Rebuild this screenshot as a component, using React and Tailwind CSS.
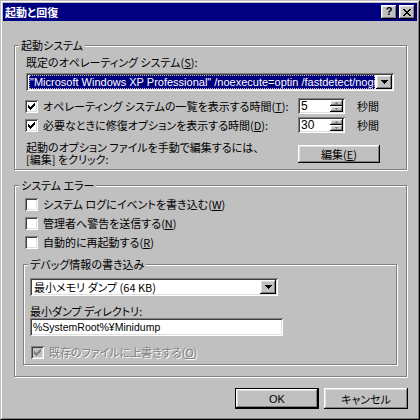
import React from 'react';

const raised =
  'bg-[#c0c0c0] shadow-[inset_-1px_-1px_0_#000,inset_1px_1px_0_#fff,inset_-2px_-2px_0_#808080,inset_2px_2px_0_#dfdfdf]';
const sunken =
  'shadow-[inset_1px_1px_0_#808080,inset_-1px_-1px_0_#fff,inset_2px_2px_0_#404040,inset_-2px_-2px_0_#dfdfdf]';
const etched = 'border border-[#808080] shadow-[1px_1px_0_#fff,inset_1px_1px_0_#fff]';
const latin = "font-['Liberation_Sans','Noto_Sans_CJK_JP',sans-serif]";

const CheckMark = ({ color = '#000' }) => (
  <svg width="7" height="7" viewBox="0 0 7 7" shapeRendering="crispEdges">
    <path
      fill={color}
      d="M0 2h1v3h-1z M1 3h1v3h-1z M2 4h1v3h-1z M3 3h1v3h-1z M4 2h1v3h-1z M5 1h1v3h-1z M6 0h1v3h-1z"
    />
  </svg>
);

const Checkbox = ({ checked, disabled }) => (
  <div
    className={`w-[13px] h-[13px] shrink-0 flex items-center justify-center ${sunken} ${
      disabled ? 'bg-[#c0c0c0]' : 'bg-white'
    }`}
  >
    {checked && <CheckMark color={disabled ? '#808080' : '#000'} />}
  </div>
);

const DownArrow = () => (
  <svg width="7" height="4" viewBox="0 0 7 4" shapeRendering="crispEdges">
    <path d="M0 0h7v1h-1v1h-1v1h-1v1h-1v-1h-1v-1h-1v-1h-1z" fill="#000" />
  </svg>
);

const GroupLabel = ({ children }) => (
  <span className="absolute -top-[8px] left-[4px] px-[2px] bg-[#c0c0c0] leading-[14px]">{children}</span>
);

const Spin = ({ value }) => (
  <div className={`w-[47px] h-[16px] bg-white flex items-center pl-[3px] pr-[2px] ${sunken}`}>
    <span className={`flex-1 leading-[12px] text-[12px] ${latin}`}>{value}</span>
    <div className="flex flex-col w-[13px] h-[12px]">
      <div className={`flex-1 flex items-center justify-center ${raised}`}>
        <svg width="3" height="2" viewBox="0 0 3 2" shapeRendering="crispEdges">
          <path d="M1 0h1v1h1v1h-3v-1h1z" fill="#808080" />
        </svg>
      </div>
      <div className={`flex-1 flex items-center justify-center ${raised}`}>
        <svg width="3" height="2" viewBox="0 0 3 2" shapeRendering="crispEdges">
          <path d="M0 0h3v1h-1v1h-1v-1h-1z" fill="#808080" />
        </svg>
      </div>
    </div>
  </div>
);

const CheckRow = ({ label, checked, disabled, className = '' }) => (
  <div className={`flex items-center h-[13px] ${className}`}>
    <Checkbox checked={checked} disabled={disabled} />
    <span
      className={`ml-[5px] leading-[13px] whitespace-nowrap ${
        disabled ? 'text-[#808080] [text-shadow:1px_1px_0_#fff]' : ''
      }`}
    >
      {label}
    </span>
  </div>
);

export default function App() {
  return (
    <div className="w-[420px] h-[420px] bg-[#c0c0c0] border border-t-[#c0c0c0] border-l-[#c0c0c0] border-b-black border-r-black text-black text-[11px] font-['Noto_Sans_CJK_JP','Liberation_Sans',sans-serif] [font-feature-settings:'palt'] overflow-hidden">
      <div className="h-full border border-t-white border-l-white border-b-[#808080] border-r-[#808080] p-[1px] flex flex-col">
        {/* title bar */}
        <div className="h-[18px] shrink-0 bg-[#000080] flex items-center pl-[2px] pr-[2px]">
          <span className="text-white font-bold leading-[14px] flex-1">起動と回復</span>
          <div className={`w-[16px] h-[14px] flex items-center justify-center ${raised}`}>
            <span className="font-bold text-[11px] leading-[11px] font-['Liberation_Sans',sans-serif] -mt-[1px]">?</span>
          </div>
          <div className={`w-[16px] h-[14px] ml-[2px] flex items-center justify-center ${raised}`}>
            <svg width="8" height="7" viewBox="0 0 8 7" shapeRendering="crispEdges">
              <path
                fill="#000"
                d="M0 0h2v1h-2z M6 0h2v1h-2z M1 1h2v1h-2z M5 1h2v1h-2z M2 2h4v1h-4z M3 3h2v1h-2z M2 4h4v1h-4z M1 5h2v1h-2z M5 5h2v1h-2z M0 6h2v1h-2z M6 6h2v1h-2z"
              />
            </svg>
          </div>
        </div>

        {/* 起動システム */}
        <div className={`relative mt-[24px] ml-[11px] w-[393px] h-[125px] shrink-0 ${etched}`}>
          <GroupLabel>起動システム</GroupLabel>
          <div className="mt-[9px] ml-[11px] h-[14px] leading-[14px]">既定のオペレーティング システム(<u>S</u>):</div>
          <div className={`mt-[4px] ml-[11px] w-[368px] h-[18px] bg-white flex items-center p-[2px] ${sunken}`}>
            <div className={`flex-1 h-[14px] mr-[1px] ml-[1px] bg-[#000080] text-white text-[11px] overflow-hidden whitespace-nowrap leading-[14px] outline-1 outline-dotted outline-[#c0c0c0] -outline-offset-1 pl-[1px] ${latin}`}>
              "Microsoft Windows XP Professional" /noexecute=optin /fastdetect/noguiboot
            </div>
            <div className={`w-[16px] h-[14px] flex items-center justify-center ${raised}`}>
              <DownArrow />
            </div>
          </div>

          <div className="mt-[7px] ml-[10px] flex items-center h-[16px]">
            <CheckRow className="w-[273px]" checked label={<>オペレーティング システムの一覧を表示する時間(<u>T</u>):</>} />
            <Spin value="5" />
            <span className="ml-[12px] leading-[14px]">秒間</span>
          </div>
          <div className="mt-[3px] ml-[10px] flex items-center h-[16px]">
            <CheckRow className="w-[273px]" checked label={<>必要なときに修復オプションを表示する時間(<u>D</u>):</>} />
            <Spin value="30" />
            <span className="ml-[12px] leading-[14px]">秒間</span>
          </div>

          <div className="mt-[8px] ml-[11px] flex items-start">
            <div className="w-[272px] leading-[12px]">
              <div>起動のオプション ファイルを手動で編集するには、</div>
              <div>[編集] をクリック:</div>
            </div>
            <div className={`mt-[4px] w-[82px] h-[18px] flex items-center justify-center leading-[14px] ${raised}`}>
              編集(<u>E</u>)
            </div>
          </div>
        </div>

        {/* システム エラー */}
        <div className={`relative mt-[15px] ml-[11px] w-[393px] h-[192px] shrink-0 ${etched}`}>
          <GroupLabel>システム エラー</GroupLabel>
          <CheckRow className="mt-[12px] ml-[10px]" label={<>システム ログにイベントを書き込む(<u>W</u>)</>} />
          <CheckRow className="mt-[6px] ml-[10px]" label={<>管理者へ警告を送信する(<u>N</u>)</>} />
          <CheckRow className="mt-[6px] ml-[10px]" label={<>自動的に再起動する(<u>R</u>)</>} />

          <div className={`relative mt-[15px] ml-[8px] w-[374px] h-[101px] ${etched}`}>
            <GroupLabel>デバッグ情報の書き込み</GroupLabel>
            <div className={`mt-[13px] ml-[6px] w-[248px] h-[18px] bg-white flex items-center p-[2px] ${sunken}`}>
              <div className="flex-1 pl-[2px] leading-[14px] whitespace-nowrap">最小メモリ ダンプ (64 KB)</div>
              <div className={`w-[16px] h-[14px] flex items-center justify-center ${raised}`}>
                <DownArrow />
              </div>
            </div>
            <div className="mt-[9px] ml-[6px] h-[12px] leading-[12px]">最小ダンプ ディレクトリ:</div>
            <div className={`mt-[1px] ml-[6px] w-[253px] h-[18px] bg-white flex items-center px-[3px] ${sunken}`}>
              <span className={`leading-[14px] text-[10.5px] whitespace-nowrap ${latin}`}>%SystemRoot%¥Minidump</span>
            </div>
            <CheckRow className="mt-[10px] ml-[7px]" checked disabled label={<>既存のファイルに上書きする(<u>O</u>)</>} />
          </div>
        </div>

        {/* buttons */}
        <div className="mt-[11px] ml-[232px] flex gap-[5px]">
          <div className="w-[84px] h-[21px] border border-black">
            <div className={`w-full h-full flex items-center justify-center leading-[14px] ${latin}`}>
              <div className={`w-full h-full flex items-center justify-center ${raised}`}>OK</div>
            </div>
          </div>
          <div className={`w-[84px] h-[21px] flex items-center justify-center leading-[14px] ${raised}`}>キャンセル</div>
        </div>
      </div>
    </div>
  );
}
